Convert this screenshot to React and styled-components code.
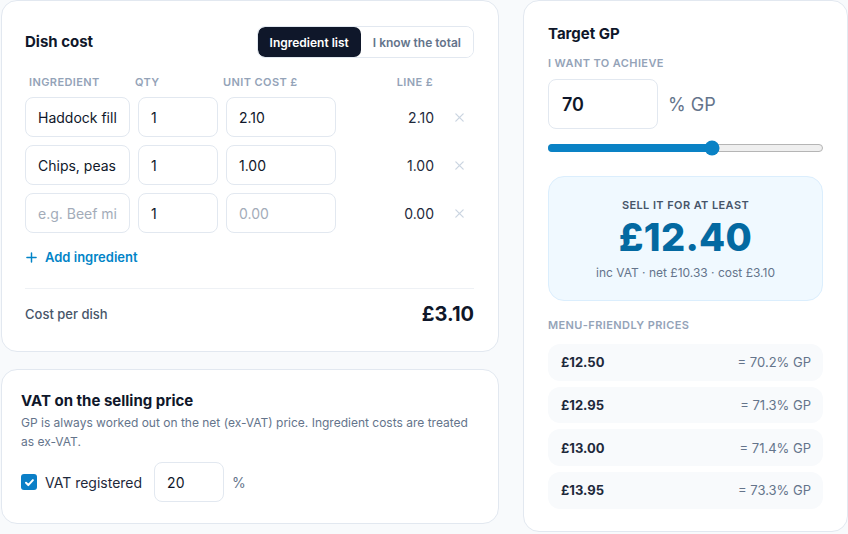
import React from "react";
import styled, { createGlobalStyle } from "styled-components";

const Global = createGlobalStyle`
  html, body { margin: 0; padding: 0; background: #f8fafc; }
  body { font-family: Inter, "Noto Sans", sans-serif; color: #0f172a; -webkit-font-smoothing: antialiased; }
  * { box-sizing: border-box; }
`;

const Page = styled.div`
  display: grid;
  grid-template-columns: 498px 325px;
  column-gap: 24px;
  align-items: start;
  padding: 0 0 0 1px;
  width: 848px;
  height: 534px;
  overflow: hidden;
`;

const Column = styled.div`
  display: flex;
  flex-direction: column;
  gap: 17px;
`;

const Card = styled.section`
  background: #fff;
  border: 1px solid #e2e8f0;
  border-radius: 16px;
  padding: ${(p) => p.$pad || "24px"};
  height: ${(p) => p.$h || "auto"};
`;

const HeaderRow = styled.div`
  display: flex;
  align-items: center;
  justify-content: space-between;
`;

const Title = styled.h2`
  margin: 0;
  font-size: 15px;
  line-height: 20px;
  font-weight: 700;
  color: #0f172a;
`;

const Toggle = styled.div`
  display: flex;
  border: 1px solid #e2e8f0;
  border-radius: 8px;
  overflow: hidden;
  height: 32px;
`;

const ToggleBtn = styled.button`
  border: 0;
  font-family: inherit;
  font-size: 12px;
  font-weight: 600;
  padding: 0 12px;
  background: ${(p) => (p.$active ? "#0f172a" : "#fff")};
  color: ${(p) => (p.$active ? "#fff" : "#64748b")};
  border-radius: ${(p) => (p.$active ? "7px" : "0")};
  cursor: pointer;
`;

const Grid = styled.div`
  display: grid;
  grid-template-columns: 105px 80px 110px 1fr 28px;
  column-gap: 8px;
  row-gap: 8px;
  align-items: center;
  margin-top: 17px;
`;

const ColLabel = styled.div`
  font-size: 11px;
  font-weight: 600;
  letter-spacing: 0.4px;
  text-transform: uppercase;
  color: #94a3b8;
  margin-left: ${(p) => p.$shift || "0"};
  padding-right: ${(p) => (p.$right ? "5px" : "0")};
  text-align: ${(p) => (p.$right ? "right" : "left")};
`;

const Input = styled.input`
  width: 100%;
  height: ${(p) => p.$h || "40px"};
  border: 1px solid #e2e8f0;
  border-radius: 8px;
  padding: 0 12px;
  font-family: inherit;
  font-size: ${(p) => p.$fs || "14px"};
  font-weight: ${(p) => p.$fw || 400};
  color: #0f172a;
  background: #fff;
  outline: none;
  &::placeholder { color: #a3acb9; }
`;

const LineValue = styled.div`
  text-align: right;
  padding-right: 4px;
  font-size: 14px;
  color: #1e293b;
`;

const RemoveBtn = styled.button`
  border: 0;
  background: none;
  padding: 0 0 0 8px;
  display: flex;
  align-items: center;
  justify-content: flex-start;
  color: #cbd5e1;
  cursor: pointer;
`;

const AddBtn = styled.button`
  display: flex;
  align-items: center;
  gap: 8px;
  margin-top: 16px;
  padding: 0 0 0 1px;
  border: 0;
  background: none;
  font-family: inherit;
  font-size: 13px;
  font-weight: 600;
  color: #0284c7;
  cursor: pointer;
`;

const Divider = styled.hr`
  border: 0;
  border-top: 1px solid #eef1f5;
  margin: 23px 0 0;
`;

const TotalRow = styled.div`
  display: flex;
  justify-content: space-between;
  align-items: center;
  padding-top: 13px;
`;

const TotalLabel = styled.span`
  font-size: 13px;
  font-weight: 500;
  color: #475569;
`;

const TotalValue = styled.span`
  font-size: 20px;
  font-weight: 700;
  color: #0f172a;
`;

const Desc = styled.p`
  margin: 2px 0 0;
  font-size: 12px;
  line-height: 19px;
  color: #64748b;
`;

const VatRow = styled.div`
  display: flex;
  align-items: center;
  margin-top: 11px;
`;

const CheckLabel = styled.label`
  display: flex;
  align-items: center;
  gap: 8px;
  font-size: 14px;
  color: #1e293b;
  margin-right: 12px;
`;

const CheckBox = styled.span`
  width: 16px;
  height: 16px;
  border-radius: 3px;
  background: #0b7fc7;
  display: flex;
  align-items: center;
  justify-content: center;
`;

const Suffix = styled.span`
  font-size: ${(p) => p.$fs || "14px"};
  color: #64748b;
  margin-left: ${(p) => p.$ml || "8px"};
`;

const SmallCaps = styled.div`
  font-size: 11px;
  font-weight: 600;
  letter-spacing: 0.4px;
  text-transform: uppercase;
  color: ${(p) => p.$c || "#94a3b8"};
  margin-top: ${(p) => p.$mt || "0"};
`;

const TargetRow = styled.div`
  display: flex;
  align-items: center;
  margin-top: 9px;
`;

const Slider = styled.div`
  position: relative;
  height: 8px;
  margin: 15px 0 0;
  border-radius: 4px;
  background: #efefef;
  border: 1px solid #b5b5b5;
`;

const SliderFill = styled.div`
  position: absolute;
  left: -1px;
  top: -1px;
  bottom: -1px;
  border-radius: 4px;
  background: #0a82c5;
`;

const Thumb = styled.div`
  position: absolute;
  top: 50%;
  width: 15px;
  height: 15px;
  border-radius: 50%;
  background: #0a82c5;
  transform: translate(-50%, -50%);
`;

const ResultBox = styled.div`
  margin-top: 24px;
  background: #f0f9ff;
  border: 1px solid #dbeefd;
  border-radius: 16px;
  padding: 21px 16px 20px;
  text-align: center;
`;

const BigPrice = styled.div`
  font-size: 38px;
  font-weight: 800;
  line-height: 46px;
  color: #0369a1;
  letter-spacing: 0.3px;
  margin-top: 2px;
`;

const ResultNote = styled.div`
  font-size: 12px;
  color: #64748b;
  margin-top: 5px;
`;

const PriceList = styled.div`
  display: flex;
  flex-direction: column;
  gap: 6px;
  margin-top: 12px;
`;

const PriceRow = styled.div`
  display: flex;
  justify-content: space-between;
  align-items: center;
  height: 36.7px;
  padding: 0 12px 0 13px;
  background: #f8fafc;
  border-radius: 12px;
`;

const PriceValue = styled.span`
  font-size: 13px;
  font-weight: 700;
  color: #1e293b;
`;

const PriceGp = styled.span`
  font-size: 13px;
  color: #64748b;
`;

const XIcon = () => (
  <svg width="11" height="11" viewBox="0 0 12 12" fill="none" stroke="currentColor" strokeWidth="1.4" strokeLinecap="round">
    <path d="M2 2l8 8M10 2l-8 8" />
  </svg>
);

const PlusIcon = () => (
  <svg width="11" height="11" viewBox="0 0 12 12" fill="none" stroke="currentColor" strokeWidth="1.6" strokeLinecap="round">
    <path d="M6 1v10M1 6h10" />
  </svg>
);

const CheckIcon = () => (
  <svg width="11" height="11" viewBox="0 0 12 12" fill="none" stroke="#fff" strokeWidth="2.2" strokeLinecap="round" strokeLinejoin="round">
    <path d="M2.2 6.3l2.5 2.5 5-5.4" />
  </svg>
);

const rows = [
  { name: "Haddock fill", qty: "1", unit: "2.10", line: "2.10" },
  { name: "Chips, peas", qty: "1", unit: "1.00", line: "1.00" },
  { name: "", qty: "1", unit: "", line: "0.00" },
];

const prices = [
  ["£12.50", "= 70.2% GP"],
  ["£12.95", "= 71.3% GP"],
  ["£13.00", "= 71.4% GP"],
  ["£13.95", "= 73.3% GP"],
];

export default function App() {
  const sliderPct = 59.6;
  return (
    <>
      <Global />
      <Page>
        <Column>
          <Card $pad="25px 24px 25px 23px">
            <HeaderRow>
              <Title>Dish cost</Title>
              <Toggle>
                <ToggleBtn $active>Ingredient list</ToggleBtn>
                <ToggleBtn>I know the total</ToggleBtn>
              </Toggle>
            </HeaderRow>
            <Grid>
              <ColLabel $shift="4px">Ingredient</ColLabel>
              <ColLabel $shift="-3px">Qty</ColLabel>
              <ColLabel $shift="-3px">Unit cost £</ColLabel>
              <ColLabel $right>Line £</ColLabel>
              <div />
              {rows.map((r, i) => (
                <React.Fragment key={i}>
                  <Input defaultValue={r.name} placeholder="e.g. Beef mince" />
                  <Input defaultValue={r.qty} />
                  <Input defaultValue={r.unit} placeholder="0.00" />
                  <LineValue>{r.line}</LineValue>
                  <RemoveBtn aria-label="Remove"><XIcon /></RemoveBtn>
                </React.Fragment>
              ))}
            </Grid>
            <AddBtn><PlusIcon />Add ingredient</AddBtn>
            <Divider />
            <TotalRow>
              <TotalLabel>Cost per dish</TotalLabel>
              <TotalValue>£3.10</TotalValue>
            </TotalRow>
          </Card>
          <Card $pad="21px 20px 21px 19px">
            <Title>VAT on the selling price</Title>
            <Desc>GP is always worked out on the net (ex-VAT) price. Ingredient costs are treated as ex-VAT.</Desc>
            <VatRow>
              <CheckLabel>
                <CheckBox><CheckIcon /></CheckBox>
                VAT registered
              </CheckLabel>
              <Input defaultValue="20" style={{ width: 70 }} />
              <Suffix>%</Suffix>
            </VatRow>
          </Card>
        </Column>
        <Card $pad="23px 24px 24px 24px" $h="532px">
          <Title>Target GP</Title>
          <SmallCaps $mt="12px">I want to achieve</SmallCaps>
          <TargetRow>
            <Input defaultValue="70" $h="50px" $fs="18px" $fw={600} style={{ width: 110, paddingLeft: 13 }} />
            <Suffix $fs="18px" $ml="10px">% GP</Suffix>
          </TargetRow>
          <Slider>
            <SliderFill style={{ width: `${sliderPct}%` }} />
            <Thumb style={{ left: `${sliderPct}%` }} />
          </Slider>
          <ResultBox>
            <SmallCaps $c="#475569">Sell it for at least</SmallCaps>
            <BigPrice>£12.40</BigPrice>
            <ResultNote>inc VAT · net £10.33 · cost £3.10</ResultNote>
          </ResultBox>
          <SmallCaps $mt="17px">Menu-friendly prices</SmallCaps>
          <PriceList>
            {prices.map(([p, g]) => (
              <PriceRow key={p}>
                <PriceValue>{p}</PriceValue>
                <PriceGp>{g}</PriceGp>
              </PriceRow>
            ))}
          </PriceList>
        </Card>
      </Page>
    </>
  );
}
